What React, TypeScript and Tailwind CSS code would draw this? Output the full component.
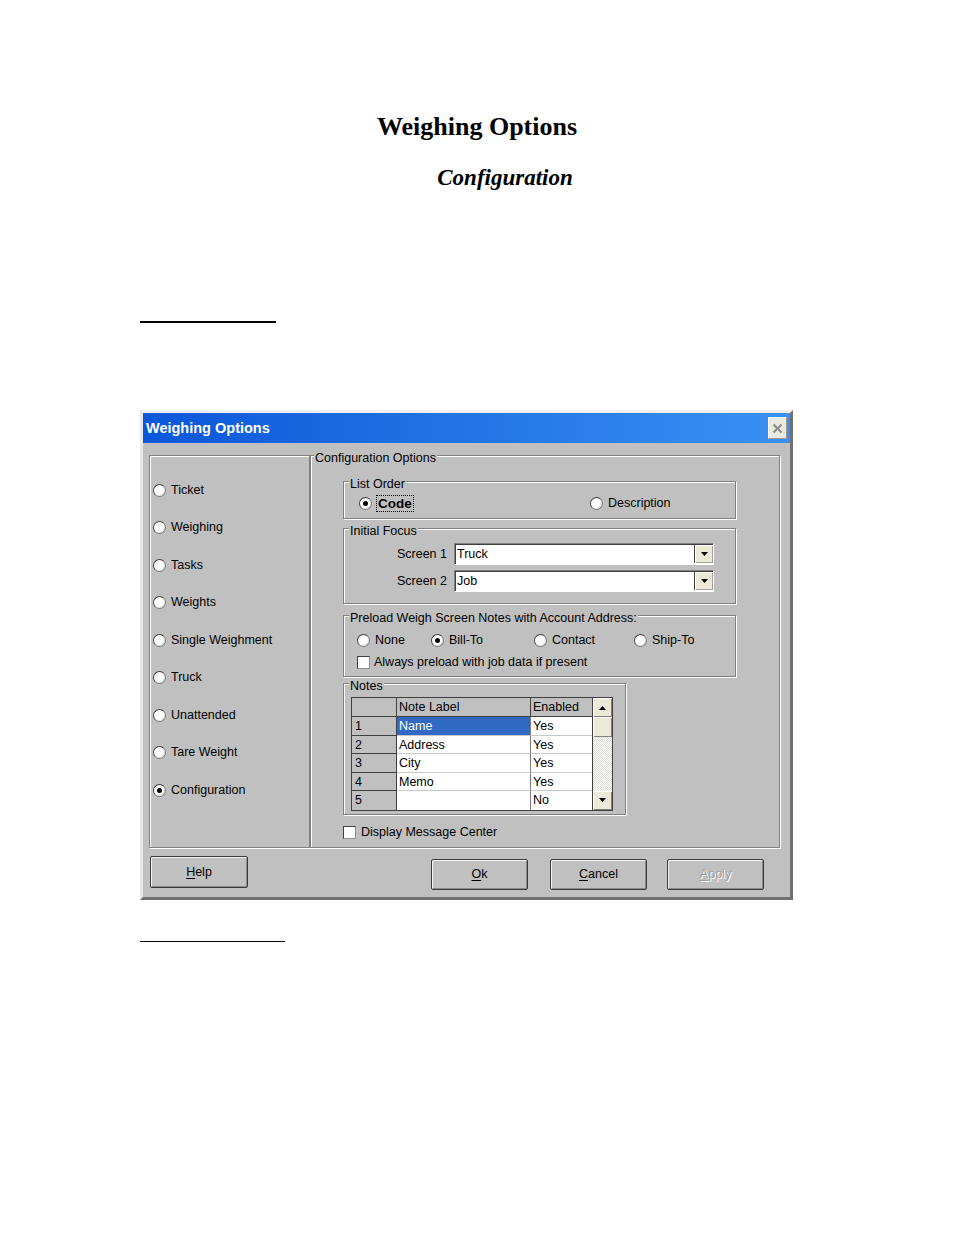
import React from "react";

const etched = "border border-[#808080] shadow-[inset_1px_1px_0_#ffffff,1px_1px_0_#ffffff]";

function Radio({ checked = false }: { checked?: boolean }) {
  return (
    <span className="flex h-[13px] w-[13px] shrink-0 items-center justify-center rounded-full border border-t-[#404040] border-l-[#404040] border-r-[#7a7a7a] border-b-[#7a7a7a] bg-white shadow-[inset_-1px_-1px_0_#e2e2e2]">
      {checked && <span className="h-[5px] w-[5px] rounded-full bg-black" />}
    </span>
  );
}

function Checkbox() {
  return (
    <span className="block h-[13px] w-[13px] shrink-0 border border-t-[#404040] border-l-[#404040] border-r-[#909090] border-b-[#909090] bg-white" />
  );
}

interface GroupBoxProps {
  label: string;
  className?: string;
  legendClass?: string;
  children?: React.ReactNode;
}

function GroupBox({ label, className = "", legendClass = "ml-[5px]", children }: GroupBoxProps) {
  return (
    <fieldset className={`${etched} min-w-0 ${className}`}>
      <legend className={`${legendClass} h-[8px] bg-[#c0c0c0] px-[1px] leading-[14px] whitespace-nowrap`}>
        {label}
      </legend>
      {children}
    </fieldset>
  );
}

function DownArrow() {
  return (
    <svg width="7" height="4" viewBox="0 0 7 4">
      <path d="M0 0h7L3.5 4z" fill="#000" />
    </svg>
  );
}

function UpArrow() {
  return (
    <svg width="7" height="4" viewBox="0 0 7 4">
      <path d="M0 4h7L3.5 0z" fill="#000" />
    </svg>
  );
}

function Combo({ value }: { value: string }) {
  return (
    <div className="flex h-[22px] w-[260px] border border-t-[#808080] border-l-[#808080] border-r-[#ffffff] border-b-[#ffffff] bg-white shadow-[inset_1px_1px_0_#404040]">
      <span className="flex-1 pl-[2px] pt-[2px] leading-[16px]">{value}</span>
      <span className="mt-[1px] mb-[1px] flex w-[19px] items-center justify-center border-l border-[#404040] bg-[#ece9d8] shadow-[inset_1px_1px_0_#ffffff,inset_-1px_-1px_0_#a0a0a0]">
        <DownArrow />
      </span>
    </div>
  );
}

function Button({
  label,
  className = "",
  disabled = false,
}: {
  label: string;
  className?: string;
  disabled?: boolean;
}) {
  return (
    <button
      className={`flex items-center justify-center rounded-[2px] border border-[#3a3a3a] bg-[#c0c0c0] shadow-[inset_1px_1px_0_#f4f4f4,inset_-1px_-1px_0_#8a8a8a] ${
        disabled ? "text-[#a3a3a3] [text-shadow:1px_1px_0_#ffffff]" : "text-black"
      } ${className}`}
    >
      <span className="underline underline-offset-2">{label[0]}</span>
      {label.slice(1)}
    </button>
  );
}

const leftOptions = [
  "Ticket",
  "Weighing",
  "Tasks",
  "Weights",
  "Single Weighment",
  "Truck",
  "Unattended",
  "Tare Weight",
  "Configuration",
];

const notes = [
  { n: "1", label: "Name", enabled: "Yes" },
  { n: "2", label: "Address", enabled: "Yes" },
  { n: "3", label: "City", enabled: "Yes" },
  { n: "4", label: "Memo", enabled: "Yes" },
  { n: "5", label: "", enabled: "No" },
];

function NotesGrid() {
  return (
    <div className="flex w-[262px] border border-[#404040] bg-white">
      <div className="flex flex-col">
        <div className="flex h-[19px]">
          <div className="w-[45px] border-r border-b border-[#404040] bg-[#c0c0c0]" />
          <div className="w-[134px] border-r border-b border-[#404040] bg-[#c0c0c0] pl-[2px] leading-[19px]">
            Note Label
          </div>
          <div className="w-[61px] border-b border-[#404040] bg-[#c0c0c0] pl-[2px] leading-[19px]">Enabled</div>
        </div>
        {notes.map((row, i) => (
          <div key={row.n} className="flex h-[18.6px]">
            <div
              className={`w-[45px] border-r border-[#404040] bg-[#c0c0c0] pl-[3px] leading-[18px] ${
                i < notes.length - 1 ? "border-b" : ""
              }`}
            >
              {row.n}
            </div>
            <div
              className={`w-[134px] border-r border-[#808080] pl-[2px] leading-[18px] ${
                i < notes.length - 1 ? "border-b border-b-[#c8c8c8]" : ""
              } ${i === 0 ? "bg-[#316ac5] text-white" : ""}`}
            >
              {row.label}
            </div>
            <div
              className={`w-[61px] pl-[2px] leading-[18px] ${
                i < notes.length - 1 ? "border-b border-[#c8c8c8]" : ""
              }`}
            >
              {row.enabled}
            </div>
          </div>
        ))}
      </div>
      <div className="flex w-[20px] flex-col border-l border-[#404040]">
        <div className="flex h-[19px] items-center justify-center bg-[#ece9d8] shadow-[inset_1px_1px_0_#ffffff,inset_-1px_-1px_0_#808080]">
          <UpArrow />
        </div>
        <div className="h-[20px] bg-[#ece9d8] shadow-[inset_1px_1px_0_#ffffff,inset_-1px_-1px_0_#808080]" />
        <div className="flex-1 bg-[repeating-conic-gradient(#ffffff_0_25%,#dcdcd4_0_50%)] bg-[length:2px_2px]" />
        <div className="flex h-[19px] items-center justify-center bg-[#ece9d8] shadow-[inset_1px_1px_0_#ffffff,inset_-1px_-1px_0_#808080]">
          <DownArrow />
        </div>
      </div>
    </div>
  );
}

function WeighingOptionsDialog() {
  return (
    <div className="ml-[140px] h-[490px] w-[653px] border-[3px] border-t-[#f0f0f0] border-l-[#e8e8e8] border-r-[#707070] border-b-[#707070] bg-[#c0c0c0] font-['Liberation_Sans',Arial,sans-serif] text-[12.5px] text-black">
      {/* Title bar */}
      <div className="flex h-[30px] items-center justify-between bg-gradient-to-r from-[#0a57d9] to-[#3b90f4] pl-[3px] pr-[3px]">
        <span className="pt-[1px] text-[14.5px] font-bold text-white">Weighing Options</span>
        <span className="flex h-[22px] w-[19px] items-center justify-center border border-t-[#ffffff] border-l-[#ffffff] border-r-[#9a9a9a] border-b-[#9a9a9a] bg-[#ebe8de]">
          <svg width="11" height="11" viewBox="0 0 11 11">
            <path d="M1.5 1.5l8 8M9.5 1.5l-8 8" stroke="#8a8a8a" strokeWidth="2" />
          </svg>
        </span>
      </div>

      {/* Body */}
      <div className="flex h-[454px] flex-col">
        <div className="flex pl-[6px] pt-[8px]">
          {/* Left option list */}
          <div className={`${etched} mt-[4px] h-[393px] w-[161px] pl-[3px] pt-[15.5px]`}>
            {leftOptions.map((opt) => (
              <div key={opt} className="flex h-[37.5px] items-center gap-[5px]">
                <Radio checked={opt === "Configuration"} />
                <span>{opt}</span>
              </div>
            ))}
          </div>

          {/* Configuration Options */}
          <GroupBox label="Configuration Options" legendClass="ml-[3px]" className="h-[397px] w-[470px]">
            <div className="flex flex-col pl-[32px]">
              <GroupBox label="List Order" className="mt-[18px] h-[42px] w-[393px]">
                <div className="flex pl-[15px] pt-[9px]">
                  <div className="flex h-[18px] w-[231px] items-center">
                    <Radio checked />
                    <span className="ml-[4px] border border-dotted border-black px-[1px] text-[13.5px] font-bold leading-[15px]">
                      Code
                    </span>
                  </div>
                  <div className="flex h-[18px] items-center gap-[5px] pt-[1px]">
                    <Radio />
                    <span>Description</span>
                  </div>
                </div>
              </GroupBox>

              <GroupBox label="Initial Focus" className="mt-[5px] h-[80px] w-[393px]">
                <div className="flex flex-col gap-[5px] pt-[11px]">
                  {[
                    ["Screen 1", "Truck"],
                    ["Screen 2", "Job"],
                  ].map(([label, value]) => (
                    <div key={label} className="flex items-center">
                      <span className="w-[104px] pr-[1px] pt-[1px] text-right">{label}</span>
                      <span className="ml-[6px]">
                        <Combo value={value} />
                      </span>
                    </div>
                  ))}
                </div>
              </GroupBox>

              <GroupBox
                label="Preload Weigh Screen Notes with Account Address:"
                className="mt-[7px] h-[66px] w-[393px]"
              >
                <div className="flex flex-col pl-[13px] pt-[13px]">
                  <div className="flex h-[16px] items-center">
                    {[
                      ["None", "w-[74px]", false],
                      ["Bill-To", "w-[103px]", true],
                      ["Contact", "w-[100px]", false],
                      ["Ship-To", "", false],
                    ].map(([label, w, checked]) => (
                      <div key={label as string} className={`flex items-center gap-[5px] ${w}`}>
                        <Radio checked={checked as boolean} />
                        <span>{label as string}</span>
                      </div>
                    ))}
                  </div>
                  <div className="mt-[6px] flex h-[16px] items-center gap-[4px]">
                    <Checkbox />
                    <span>Always preload with job data if present</span>
                  </div>
                </div>
              </GroupBox>

              <GroupBox label="Notes" className="mt-[2px] h-[136px] w-[283px]">
                <div className="pl-[7px] pt-[10px]">
                  <NotesGrid />
                </div>
              </GroupBox>

              <div className="mt-[9px] flex h-[16px] items-center gap-[5px]">
                <Checkbox />
                <span>Display Message Center</span>
              </div>
            </div>
          </GroupBox>
        </div>

        {/* Buttons */}
        <div className="flex items-start pl-[7px] pt-[8px]">
          <Button label="Help" className="h-[32px] w-[98px]" />
          <Button label="Ok" className="ml-[183px] mt-[3px] h-[31px] w-[97px]" />
          <Button label="Cancel" className="ml-[22px] mt-[3px] h-[31px] w-[97px]" />
          <Button label="Apply" disabled className="ml-[20px] mt-[3px] h-[31px] w-[97px]" />
        </div>
      </div>
    </div>
  );
}

export default function App() {
  return (
    <div className="min-h-[1235px] w-[954px] bg-white">
      <div className="pt-[112px] font-['Liberation_Serif','Times_New_Roman',serif] text-black">
        <h1 className="text-center text-[26px] font-bold leading-[30px]">Weighing Options</h1>
        <h2 className="mt-[23px] pl-[56px] text-center text-[23px] font-bold italic leading-[26px]">
          Configuration
        </h2>
      </div>
      <div className="ml-[140px] mt-[130px] h-[2px] w-[136px] bg-black" />
      <div className="mt-[87px]">
        <WeighingOptionsDialog />
      </div>
      <div className="ml-[140px] mt-[41px] h-px w-[145px] bg-black" />
    </div>
  );
}
